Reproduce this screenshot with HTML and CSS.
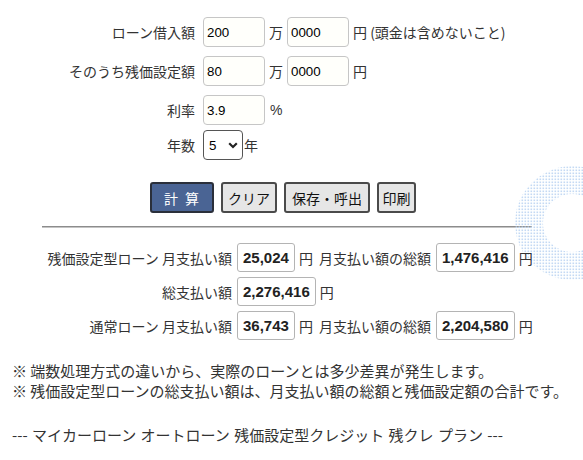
FILE: index.html
```html
<!DOCTYPE html>
<html lang="ja">
<head>
<meta charset="utf-8">
<title>残価設定型ローン計算</title>
<link rel="stylesheet" href="styles.css">
</head>
<body>
<div class="page">
  <svg class="deco" width="68" height="114" viewBox="0 0 68 114" aria-hidden="true">
    <defs>
      <pattern id="dots" width="3" height="3" patternUnits="userSpaceOnUse">
        <rect x="0.5" y="0.5" width="1.6" height="1.6" fill="#c4d9f4"/>
      </pattern>
    </defs>
    <path d="M57 0 A57 57 0 1 0 57.01 0 Z M57 28 A29 29 0 1 1 56.99 28 Z" fill="url(#dots)" fill-rule="evenodd"/>
  </svg>

  <div class="form">
    <div class="row">
      <span class="label">ローン借入額</span>
      <input class="field" type="text" value="200">
      <span class="unit">万</span>
      <input class="field" type="text" value="0000">
      <span class="unit">円 (頭金は含めないこと)</span>
    </div>
    <div class="row">
      <span class="label">そのうち残価設定額</span>
      <input class="field" type="text" value="80">
      <span class="unit">万</span>
      <input class="field" type="text" value="0000">
      <span class="unit">円</span>
    </div>
    <div class="row row-rate">
      <span class="label">利率</span>
      <input class="field" type="text" value="3.9">
      <span class="unit unit-pct">%</span>
    </div>
    <div class="row row-last">
      <span class="label">年数</span>
      <span class="select">5<svg class="chev" width="10" height="7" viewBox="0 0 10 7"><path d="M1.2 1.3 L5 5 L8.8 1.3" fill="none" stroke="#222" stroke-width="2.2"/></svg></span>
      <span class="unit unit-year">年</span>
    </div>
  </div>

  <div class="buttons">
    <button class="btn btn-calc">計 算</button>
    <button class="btn btn-clear">クリア</button>
    <button class="btn btn-save">保存・呼出</button>
    <button class="btn btn-print">印刷</button>
  </div>

  <div class="rule"></div>

  <div class="results">
    <div class="rrow">
      <span class="rlabel">残価設定型ローン 月支払い額</span>
      <span class="val">25,024</span>
      <span class="yen">円</span>
      <span class="sub">月支払い額の総額</span>
      <span class="val">1,476,416</span>
      <span class="yen">円</span>
    </div>
    <div class="rrow">
      <span class="rlabel">総支払い額</span>
      <span class="val">2,276,416</span>
      <span class="yen">円</span>
    </div>
    <div class="rrow rrow-last">
      <span class="rlabel">通常ローン 月支払い額</span>
      <span class="val">36,743</span>
      <span class="yen">円</span>
      <span class="sub">月支払い額の総額</span>
      <span class="val">2,204,580</span>
      <span class="yen">円</span>
    </div>
  </div>

  <div class="notes">
    <p>※ 端数処理方式の違いから、実際のローンとは多少差異が発生します。</p>
    <p>※ 残価設定型ローンの総支払い額は、月支払い額の総額と残価設定額の合計です。</p>
  </div>
  <p class="keywords">--- マイカーローン オートローン 残価設定型クレジット 残クレ プラン ---</p>
</div>
</body>
</html>
```

FILE: styles.css
```css
html, body {
  margin: 0;
  padding: 0;
  background: #fff;
}
body {
  font-family: "Noto Sans CJK JP", "Noto Sans", sans-serif;
  font-size: 14px;
  color: #333;
  overflow: hidden;
}
.page {
  position: relative;
  width: 583px;
  height: 460px;
}
.deco {
  position: absolute;
  left: 515px;
  top: 166px;
}
.form {
  padding-top: 17px;
  position: relative;
}
.row {
  display: flex;
  align-items: center;
  height: 30px;
  margin-bottom: 9px;
}
.row-rate {
  margin-bottom: 5px;
}
.row-last {
  margin-bottom: 0;
}
.label {
  width: 195px;
  margin-right: 8px;
  text-align: right;
  white-space: nowrap;
}
.field {
  box-sizing: border-box;
  width: 62px;
  height: 30px;
  border: 1px solid #c6c6c6;
  border-radius: 4px;
  background: #fffffb;
  padding: 0 3px;
  font-family: "Liberation Sans", Arial, sans-serif;
  font-size: 13.33px;
  color: #000;
  margin: 0;
}
.unit {
  margin-left: 4px;
  margin-right: 4px;
  white-space: nowrap;
}
.unit-pct {
  font-family: "Liberation Sans", Arial, sans-serif;
  margin-left: 5px;
}
.unit-year {
  margin-left: 1px;
}
.select {
  box-sizing: border-box;
  width: 40px;
  height: 30px;
  border: 1px solid #555;
  border-radius: 4px;
  background: #fff;
  display: flex;
  align-items: center;
  justify-content: space-between;
  padding: 0 4px 0 5px;
  font-family: "Liberation Sans", Arial, sans-serif;
  font-size: 13.33px;
  color: #000;
}
.buttons {
  display: flex;
  gap: 7px;
  padding-left: 150px;
  margin-top: 22px;
}
.btn {
  box-sizing: border-box;
  height: 31px;
  border: 2px solid #4a4a4a;
  border-radius: 3px;
  background: #e6e6e6;
  font-family: "Noto Sans CJK JP", sans-serif;
  font-size: 14px;
  color: #111;
  padding: 0;
  margin: 0;
  line-height: 1;
}
.btn-calc {
  width: 64px;
  background: #4a6494;
  border-color: #2a2f3a;
  color: #fff;
  letter-spacing: 1px;
  word-spacing: 2px;
}
.btn-clear {
  width: 56px;
}
.btn-save {
  width: 86px;
}
.btn-print {
  width: 39px;
}
.rule {
  margin: 13px 0 0 42px;
  width: 490px;
  border-top: 1px solid #8c8c8c;
  border-bottom: 1px solid #c4c4c4;
}
.results {
  margin-top: 15px;
  position: relative;
}
.rrow {
  display: flex;
  align-items: center;
  height: 29px;
  margin-bottom: 5px;
}
.rrow-last {
  margin-bottom: 0;
}
.rlabel {
  width: 232px;
  text-align: right;
  margin-right: 5px;
  white-space: nowrap;
}
.val {
  box-sizing: border-box;
  height: 29px;
  border: 1px solid #b4b4b4;
  border-radius: 3px;
  padding: 0 5px;
  display: flex;
  align-items: center;
  font-family: "Liberation Sans", Arial, sans-serif;
  font-weight: bold;
  font-size: 15px;
  color: #222;
  background: #fff;
}
.yen {
  margin-left: 4px;
}
.sub {
  margin-left: 6px;
  margin-right: 5px;
}
.notes {
  margin-top: 21px;
  padding-left: 12px;
  font-size: 15px;
}
.notes p {
  margin: 0;
  line-height: 20px;
}
.keywords {
  margin: 24px 0 0 12px;
  line-height: 20px;
  font-size: 15px;
  word-spacing: 1px;
}
```
